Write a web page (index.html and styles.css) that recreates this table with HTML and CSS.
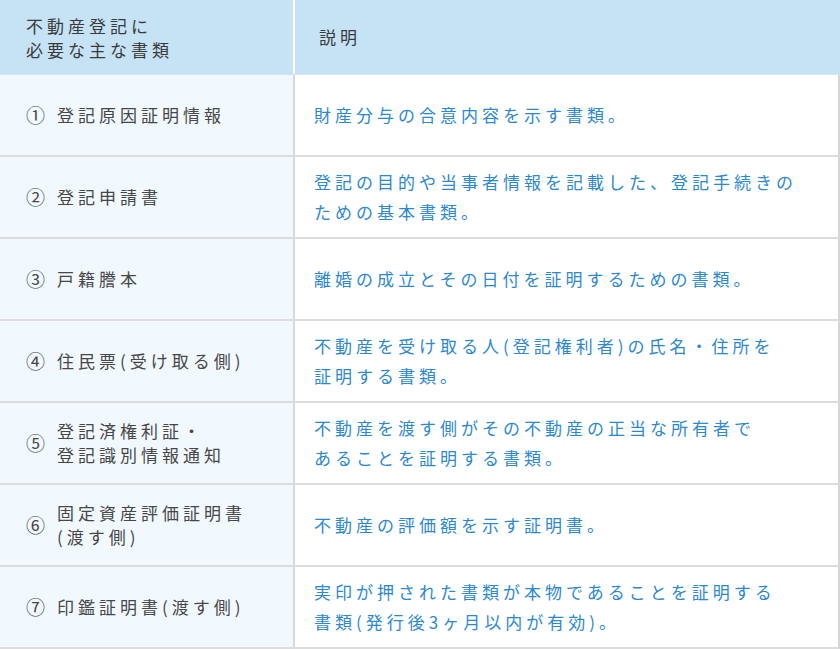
FILE: index.html
```html
<!DOCTYPE html>
<html lang="ja">
<head>
<meta charset="utf-8">
<link rel="stylesheet" href="styles.css">
</head>
<body>
<div class="table">
  <div class="row head">
    <div class="cell left">不動産登記に<br>必要な主な書類</div>
    <div class="cell right">説明</div>
  </div>
  <div class="row">
    <div class="cell left"><span class="num">①</span><span class="name">登記原因証明情報</span></div>
    <div class="cell right">財産分与の合意内容を示す書類。</div>
  </div>
  <div class="row">
    <div class="cell left"><span class="num">②</span><span class="name">登記申請書</span></div>
    <div class="cell right">登記の目的や当事者情報を記載した、登記手続きの<br>ための基本書類。</div>
  </div>
  <div class="row">
    <div class="cell left"><span class="num">③</span><span class="name">戸籍謄本</span></div>
    <div class="cell right">離婚の成立とその日付を証明するための書類。</div>
  </div>
  <div class="row">
    <div class="cell left"><span class="num">④</span><span class="name">住民票(受け取る側)</span></div>
    <div class="cell right">不動産を受け取る人(登記権利者)の氏名・住所を<br>証明する書類。</div>
  </div>
  <div class="row">
    <div class="cell left"><span class="num">⑤</span><span class="name">登記済権利証・<br>登記識別情報通知</span></div>
    <div class="cell right">不動産を渡す側がその不動産の正当な所有者で<br>あることを証明する書類。</div>
  </div>
  <div class="row">
    <div class="cell left"><span class="num">⑥</span><span class="name">固定資産評価証明書<br>(渡す側)</span></div>
    <div class="cell right">不動産の評価額を示す証明書。</div>
  </div>
  <div class="row">
    <div class="cell left"><span class="num">⑦</span><span class="name">印鑑証明書(渡す側)</span></div>
    <div class="cell right">実印が押された書類が本物であることを証明する<br>書類(発行後3ヶ月以内が有効)。</div>
  </div>
</div>
</body>
</html>
```
FILE: styles.css
```css
* { box-sizing: border-box; }
html, body { margin: 0; padding: 0; background: #ffffff; }
body {
  width: 840px;
  height: 649px;
  overflow: hidden;
  font-family: "Noto Sans CJK JP", "Noto Sans", sans-serif;
  font-weight: 400;
  font-size: 17px;
  letter-spacing: 4px;
}
.table { display: flex; flex-direction: column; }
.row {
  display: grid;
  grid-template-columns: 295px 1fr;
  height: 82px;
  border-bottom: 2px solid #dcdcdc;
  border-right: 2px solid #d6d6d6;
}
.row.head {
  height: 75px;
  background: #c6e3f6;
  border-bottom: 1px solid #d7e2ea;
  border-right: none;
}
.cell {
  display: flex;
  align-items: center;
  white-space: nowrap;
}
.cell.left {
  background: #f1f8fe;
  border-right: 2px solid #d8d8d8;
  padding-left: 26px;
  color: #474747;
  line-height: 24px;
}
.cell.right {
  padding-left: 19px;
  color: #2d88d0;
  line-height: 30px;
}
.head .cell.left {
  background: transparent;
  border-right: 2px solid #ffffff;
  color: #3a3a3a;
  display: block;
  padding-top: 14px;
}
.head .cell.right {
  color: #3a3a3a;
  padding-left: 24px;
}
.num { width: 31px; flex: none; letter-spacing: 0; font-size: 19px; }
.name { display: block; }
```
